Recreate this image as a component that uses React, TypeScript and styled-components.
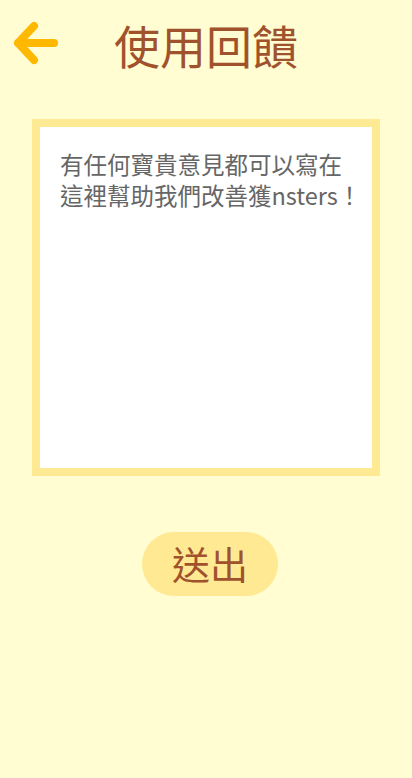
import React from "react";
import styled, { createGlobalStyle } from "styled-components";

const Global = createGlobalStyle`
  html, body { margin: 0; padding: 0; background: #FFFDD1; }
  body { font-family: "Noto Sans CJK TC", "Noto Sans", sans-serif; }
  * { box-sizing: border-box; }
`;

const Page = styled.div`
  width: 412px;
  min-height: 778px;
  background: #FFFDD1;
  display: flex;
  flex-direction: column;
  align-items: center;
`;

const Header = styled.header`
  width: 100%;
  height: 90px;
  display: grid;
  grid-template-columns: 1fr auto 1fr;
  align-items: center;
  padding: 0 12px;
`;

const BackButton = styled.button`
  justify-self: start;
  background: none;
  border: none;
  padding: 0;
  width: 50px;
  height: 44px;
  display: flex;
  align-items: center;
  cursor: pointer;
  margin-top: -4px;
`;

const Title = styled.h1`
  margin: 0;
  font-size: 46px;
  font-weight: 400;
  color: #A0522D;
  line-height: 1;
  margin-top: -2px;
`;

const Frame = styled.div`
  margin-top: 29px;
  width: 348px;
  height: 357px;
  border: 8px solid #FFEA94;
  background: #fff;
`;

const Feedback = styled.textarea`
  width: 100%;
  height: 100%;
  border: none;
  outline: none;
  resize: none;
  overflow: hidden;
  padding: 22px 0 20px 20px;
  font-family: "Noto Sans CJK TC", "Noto Sans", sans-serif;
  font-size: 23.5px;
  line-height: 31px;
  color: #555;
  background: transparent;
  &::placeholder { color: #666; opacity: 1; }
`;

const Submit = styled.button`
  margin-top: 56px;
  margin-left: 8px;
  width: 136px;
  height: 64px;
  border-radius: 32px;
  border: none;
  background: #FFE993;
  color: #A0522D;
  font-family: "Noto Sans CJK TC", "Noto Sans", sans-serif;
  font-size: 38px;
  line-height: 1;
  padding: 0 0 2px;
  cursor: pointer;
`;

export default function App() {
  return (
    <>
      <Global />
      <Page>
        <Header>
          <BackButton aria-label="返回">
            <svg width="48" height="44" viewBox="0 0 48 44">
              <path d="M6 22 H42 M22 5 L6 22 L22 39" fill="none" stroke="#FFB800" strokeWidth="8" strokeLinecap="round" strokeLinejoin="round" />
            </svg>
          </BackButton>
          <Title>使用回饋</Title>
          <div />
        </Header>
        <Frame>
          <Feedback placeholder={"有任何寶貴意見都可以寫在\n這裡幫助我們改善獲nsters！"} />
        </Frame>
        <Submit>送出</Submit>
      </Page>
    </>
  );
}
